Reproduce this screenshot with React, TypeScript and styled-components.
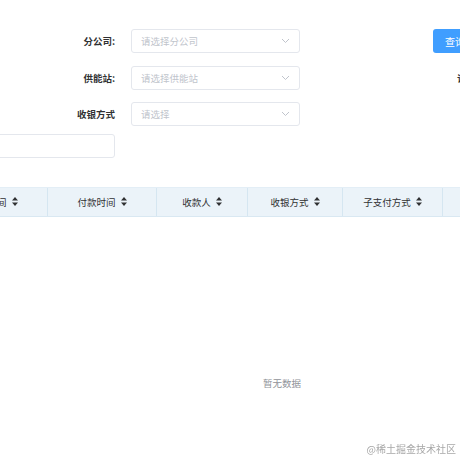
import React from 'react';
import styled, { createGlobalStyle } from 'styled-components';

const GlobalStyle = createGlobalStyle`
    html, body {
        margin: 0;
        padding: 0;
        background: #ffffff;
        overflow: hidden;
        font-family: 'Noto Sans CJK SC', 'Noto Sans', sans-serif;
    }
`;

interface ColumnInter {
    title: string;
    width: number;
}

const columns: ColumnInter[] = [
    { title: '下单时间', width: 109 },
    { title: '付款时间', width: 109 },
    { title: '收款人', width: 91 },
    { title: '收银方式', width: 95 },
    { title: '子支付方式', width: 100 },
    { title: '操作', width: 182 },
];

const Chevron = () => (
    <svg width="9" height="6" viewBox="0 0 9 6">
        <path d="M1 1 L4.5 4.5 L8 1" fill="none" stroke="#c0c4cc" strokeWidth="1" />
    </svg>
);

const SortIcon = () => (
    <svg width="6" height="9" viewBox="0 0 6 9">
        <path d="M3 0 L6 3.5 L0 3.5 Z" fill="#303133" />
        <path d="M3 9 L6 5.5 L0 5.5 Z" fill="#303133" />
    </svg>
);

const SelectBox: React.FC<{ placeholder: string }> = ({ placeholder }) => (
    <Select>
        <Placeholder>{placeholder}</Placeholder>
        <Chevron />
    </Select>
);

export default function App(): JSX.Element {
    return (
        <>
            <GlobalStyle />
            <Page>
                <Form>
                    <Label>分公司:</Label>
                    <SelectBox placeholder="请选择分公司" />
                    <Spacer />
                    <QueryButton>查询</QueryButton>

                    <Label>供能站:</Label>
                    <SelectBox placeholder="请选择供能站" />
                    <Spacer />
                    <SideLabel>订单号:</SideLabel>

                    <Label>收银方式</Label>
                    <SelectBox placeholder="请选择" />
                    <Spacer />
                    <span />

                    <WideInput />
                </Form>
                <Table>
                    <HeaderRow>
                        {columns.map((col) => (
                            <HeaderCell key={col.title} style={{ width: col.width }}>
                                <span>{col.title}</span>
                                <SortIcon />
                            </HeaderCell>
                        ))}
                    </HeaderRow>
                    <EmptyBody>暂无数据</EmptyBody>
                </Table>
            </Page>
            <Watermark>@稀土掘金技术社区</Watermark>
        </>
    );
}

const Page = styled.div`
    margin-left: -61px;
    padding-top: 29px;
    width: 700px;
`;

const Form = styled.div`
    display: grid;
    grid-template-columns: 176px 169px 149px auto;
    grid-auto-rows: 24px;
    row-gap: 12.5px;
    align-items: center;
`;

const Label = styled.label`
    justify-self: end;
    font-size: 9.5px;
    font-weight: 700;
    color: #303133;
`;

const Select = styled.div`
    box-sizing: border-box;
    height: 24px;
    width: 169px;
    margin-left: 16px;
    border: 1px solid #e4e7ed;
    border-radius: 3px;
    display: flex;
    align-items: center;
    justify-content: space-between;
    padding: 0 9px 0 9px;
    background: #fff;
`;

const Placeholder = styled.span`
    font-size: 9.5px;
    color: #c0c4cc;
`;

const Spacer = styled.span``;

const QueryButton = styled.button`
    justify-self: start;
    width: 60px;
    height: 24px;
    border: none;
    border-radius: 3px;
    background: #409eff;
    color: #fff;
    font-family: 'Noto Sans CJK SC', sans-serif;
    font-size: 10px;
    text-align: left;
    padding: 0 12px;
`;

const SideLabel = styled.span`
    font-size: 9.5px;
    font-weight: 700;
    color: #303133;
    margin-left: 24px;
`;

const WideInput = styled.div`
    grid-column: 1;
    box-sizing: border-box;
    height: 24px;
    margin-top: -9px;
    width: 160px;
    justify-self: end;
    border: 1px solid #e4e7ed;
    border-radius: 3px;
`;

const Table = styled.div`
    margin-top: 24px;
    width: 686px;
`;

const HeaderRow = styled.div`
    display: flex;
    height: 30px;
    background: #ebf3f9;
    border-top: 1px solid #e3eef6;
    border-bottom: 1px solid #d9e8f2;
    box-sizing: border-box;
`;

const HeaderCell = styled.div`
    box-sizing: border-box;
    flex: none;
    display: flex;
    align-items: center;
    justify-content: center;
    gap: 5px;
    border-right: 1px solid #d5e6f1;
    font-size: 9.5px;
    color: #303133;
    &:last-child {
        border-right: none;
    }
`;

const EmptyBody = styled.div`
    height: 332px;
    display: flex;
    align-items: center;
    justify-content: center;
    font-size: 9.5px;
    color: #909399;
`;

const Watermark = styled.div`
    position: fixed;
    right: 4px;
    bottom: 4px;
    font-size: 10px;
    color: #a8a8a8;
    font-family: 'Noto Sans CJK SC', serif;
`;
